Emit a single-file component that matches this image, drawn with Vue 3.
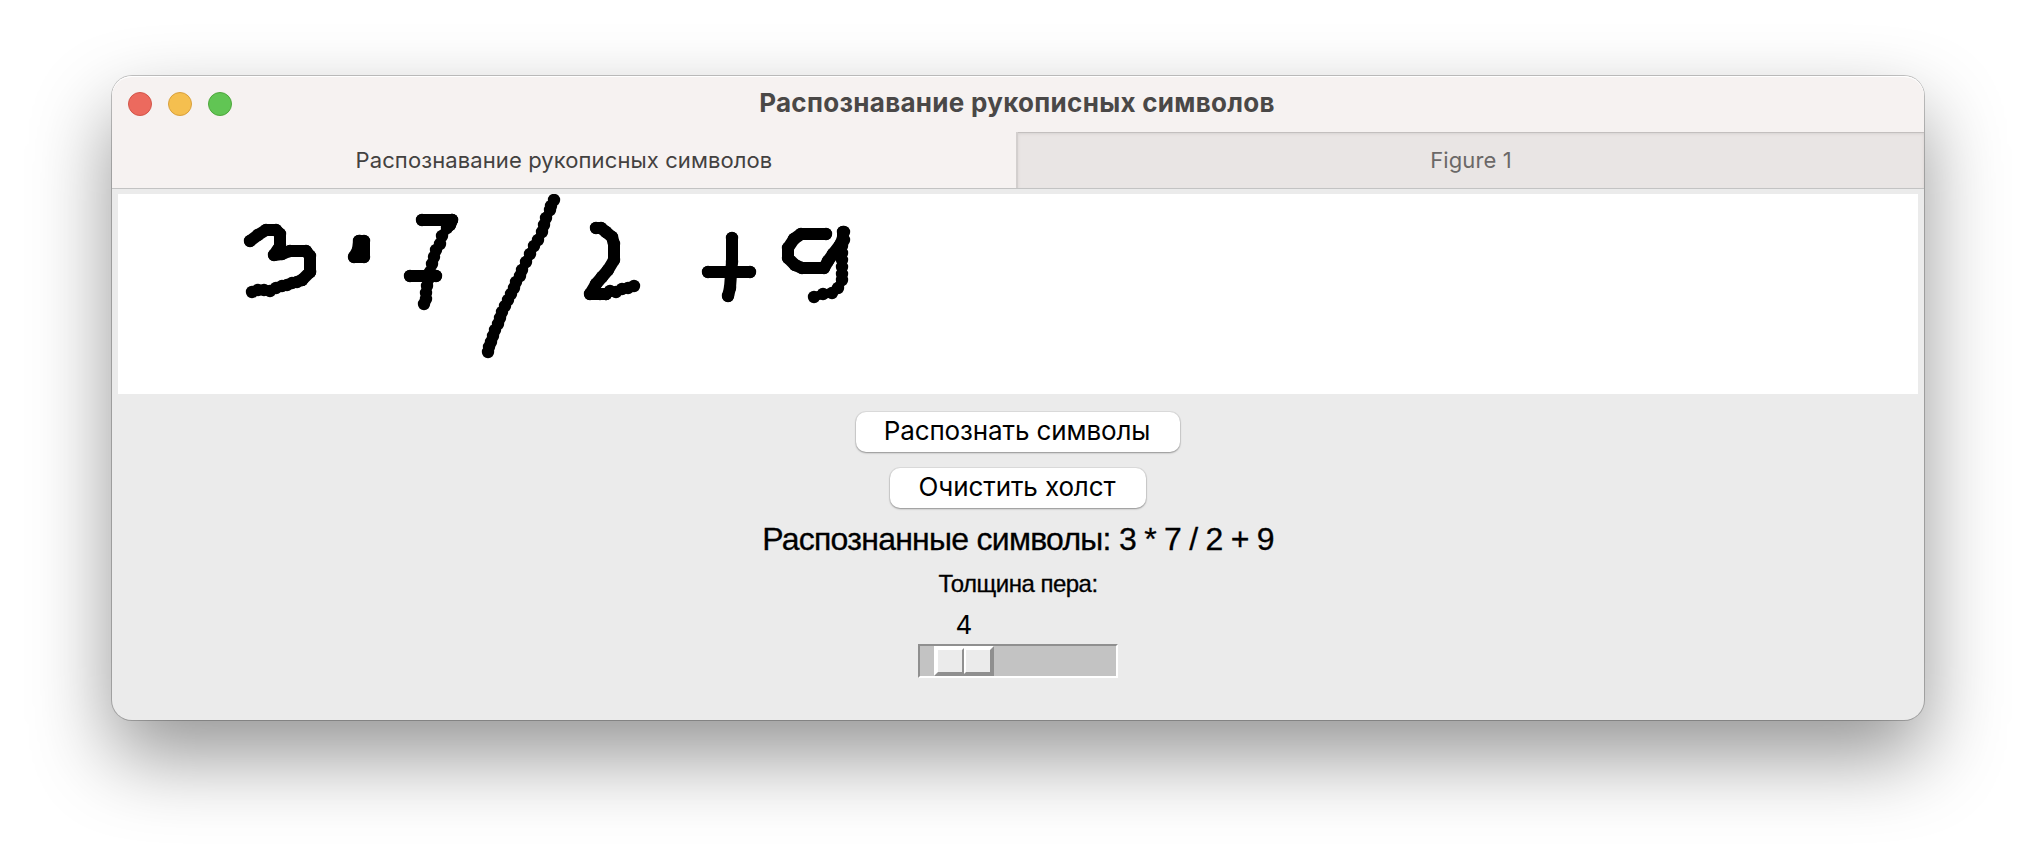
<script setup>
const lights = ['close', 'minimize', 'zoom']

// Pen strokes in canvas coordinates (canvas is 1800 x 200).
const strokes = [
  // 3
  { points: [[132, 47], [140, 41], [148, 36], [158, 36], [162, 40], [162, 52], [156, 61], [164, 60], [172, 57], [188, 57], [192, 62], [192, 78], [184, 86]] },
  { fast: true, points: [[192, 78], [184, 86], [179, 88], [174, 89], [169, 91], [164, 92], [158, 94], [152, 97], [146, 96], [140, 96], [134, 98]] },
  // multiplication dot
  { points: [[242, 47], [246, 47], [246, 63], [236, 63], [240, 56], [241, 47]] },
  // 7
  { points: [[304, 26], [334, 26], [332, 31]] },
  { fast: true, points: [[334, 26], [329, 34], [324, 42], [322, 50], [318, 56], [316, 63], [314, 70], [312, 78], [310, 86], [309, 92], [308, 99], [308, 105], [306, 110]] },
  { points: [[292, 82], [318, 82]] },
  // slash
  { fast: true, points: [[436, 6], [433, 12], [432, 16], [428, 24], [426, 31], [424, 38], [420, 46], [416, 52], [412, 60], [408, 68], [404, 76], [402, 82], [398, 88], [396, 94], [393, 100], [390, 106], [387, 112], [384, 118], [382, 124], [380, 130], [377, 136], [375, 142], [373, 148], [371, 153], [370, 158]] },
  // 2
  { points: [[478, 34], [483, 34], [488, 38], [494, 43], [496, 50], [496, 66], [490, 76], [484, 83], [478, 90], [472, 100], [488, 100]] },
  { fast: true, points: [[482, 100], [488, 100], [492, 97], [498, 98], [504, 95], [510, 94], [516, 92]] },
  // plus
  { points: [[614, 44], [614, 68], [613, 80], [612, 94], [610, 102]] },
  { points: [[590, 78], [632, 78]] },
  // 9
  { points: [[708, 40], [683, 40], [676, 45], [670, 54], [670, 64], [677, 71], [684, 74], [706, 74], [710, 67], [715, 60], [722, 51], [725, 44], [725, 38]] },
  { fast: true, points: [[726, 38], [726, 46], [724, 52], [724, 59], [724, 66], [724, 73], [724, 80], [724, 86], [720, 94], [714, 99], [705, 100], [696, 103]] },
]

const drawn = strokes.map((s) => ({
  line: s.points.map((p) => p.join(',')).join(' '),
  dots: s.points,
  fast: !!s.fast,
}))
</script>

<template>
  <main class="desktop">
    <section class="window">
      <header class="titlebar">
        <div class="lights">
          <i v-for="l in lights" :key="l" class="light" :class="l"></i>
        </div>
        <h1 class="title"><span>Распознавание рукописных символов</span></h1>
      </header>
      <nav class="tabs">
        <div class="tab active"><span>Распознавание рукописных символов</span></div>
        <div class="tab idle"><span>Figure 1</span></div>
      </nav>
      <div class="body">
        <svg class="canvas" width="1800" height="200" viewBox="0 0 1800 200">
          <g v-for="(s, i) in drawn" :key="i">
            <polyline :points="s.line" class="ink" :class="{ fast: s.fast }" />
            <circle v-for="(d, j) in s.dots" :key="j" :cx="d[0]" :cy="d[1]" r="6.2" />
          </g>
        </svg>
        <button class="btn recognize"><span>Распознать символы</span></button>
        <button class="btn clear"><span>Очистить холст</span></button>
        <p class="result"><span>Распознанные символы: 3 * 7 / 2 + 9</span></p>
        <p class="pen"><span>Толщина пера:</span></p>
        <div class="scale">
          <div class="value">4</div>
          <div class="trough">
            <div class="thumb"><i></i><i></i></div>
          </div>
        </div>
      </div>
    </section>
  </main>
</template>

<style>
html, body { margin: 0; background: #fff; overflow: hidden; }
</style>

<style scoped>
.desktop {
  box-sizing: border-box;
  width: 2036px;
  height: 868px;
  padding: 76px 112px 148px;
  background: #fff;
  overflow: hidden;
  font-family: Inter, "Liberation Sans", sans-serif;
}
.window {
  height: 644px;
  border-radius: 20px;
  background: #ebebeb;
  box-shadow: 0 0 0 1px rgba(0, 0, 0, 0.22), 0 36px 80px rgba(0, 0, 0, 0.42);
  display: flex;
  flex-direction: column;
}
.titlebar {
  height: 56px;
  flex: none;
  box-sizing: border-box;
  padding: 0 16px;
  display: grid;
  grid-template-columns: 104px 1fr 106px;
  align-items: center;
  background: #f6f2f1;
  border-radius: 20px 20px 0 0;
  box-shadow: inset 0 1px 0 #fff;
}
.lights { display: flex; gap: 16px; }
.light {
  box-sizing: border-box;
  width: 24px;
  height: 24px;
  border-radius: 50%;
  border: 1px solid;
}
.close { background: #ec6a5e; border-color: #d35549; }
.minimize { background: #f5bf4f; border-color: #d9a03c; }
.zoom { background: #61c554; border-color: #4ea73c; }
.title {
  margin: 0 0 2px;
  text-align: center;
  font-size: 26px;
  line-height: 32px;
  font-weight: 700;
  letter-spacing: 0.3px;
  color: #4a4847;
  white-space: nowrap;
}
.tabs {
  height: 56px;
  flex: none;
  display: grid;
  grid-template-columns: 904px 1fr;
  background: #f6f2f1;
}
.tab {
  display: flex;
  align-items: center;
  justify-content: center;
  font-size: 22px;
  letter-spacing: 0.1px;
  white-space: nowrap;
}
.active { color: #434140; }
.idle {
  color: #6b6867;
  background: #e9e5e4;
  border-left: 2px solid #d3cfce;
  box-shadow: inset 0 1px 0 #c3bfbe, inset 0 2px 3px #d6d2d1;
}
.body {
  flex: 1;
  border-top: 1px solid #c3c3c3;
  padding-top: 5px;
  display: flex;
  flex-direction: column;
  align-items: center;
}
.canvas { background: #fff; display: block; flex: none; }
.ink {
  fill: none;
  stroke: #000;
  stroke-width: 12;
  stroke-linejoin: round;
  stroke-linecap: round;
}
.ink.fast { stroke-width: 9; }
.btn {
  flex: none;
  height: 40px;
  padding: 0 2px 2px 0;
  border: 0;
  border-radius: 10px;
  background: #fff;
  color: #000;
  font: 26px/38px Inter, "Liberation Sans", sans-serif;
  letter-spacing: -0.12px;
  white-space: nowrap;
  box-shadow: 0 0 0 1px rgba(0, 0, 0, 0.06), 0 1px 2px rgba(0, 0, 0, 0.35);
}
.recognize { width: 324px; margin-top: 18px; }
.clear { width: 256px; margin-top: 16px; }
.result, .pen {
  margin: 0;
  color: #000;
  font-family: "Liberation Sans", Arial, sans-serif;
  white-space: nowrap;
  -webkit-text-stroke: 0.3px #000;
}
.result { margin-top: 12px; font-size: 32px; line-height: 38px; letter-spacing: -0.74px; }
.pen { margin-top: 12px; font-size: 24px; line-height: 28px; letter-spacing: -0.5px; }
.scale { width: 200px; margin-top: 11px; }
.value {
  width: 92px;
  text-align: center;
  font-size: 26px;
  line-height: 32px;
  margin-bottom: 3px;
  color: #000;
}
.trough {
  box-sizing: border-box;
  height: 34px;
  border: 2px solid;
  border-color: #8f8f8f #fff #fff #8f8f8f;
  background: #c3c3c3;
  padding-left: 14px;
}
.thumb {
  box-sizing: border-box;
  width: 60px;
  height: 30px;
  display: flex;
  border: 2px solid;
  border-color: #fff #8f8f8f #8f8f8f #fff;
}
.thumb i {
  box-sizing: border-box;
  flex: 1;
  border: 2px solid;
  border-color: #fff #8f8f8f #8f8f8f #fff;
  background: #ebebeb;
}
</style>
